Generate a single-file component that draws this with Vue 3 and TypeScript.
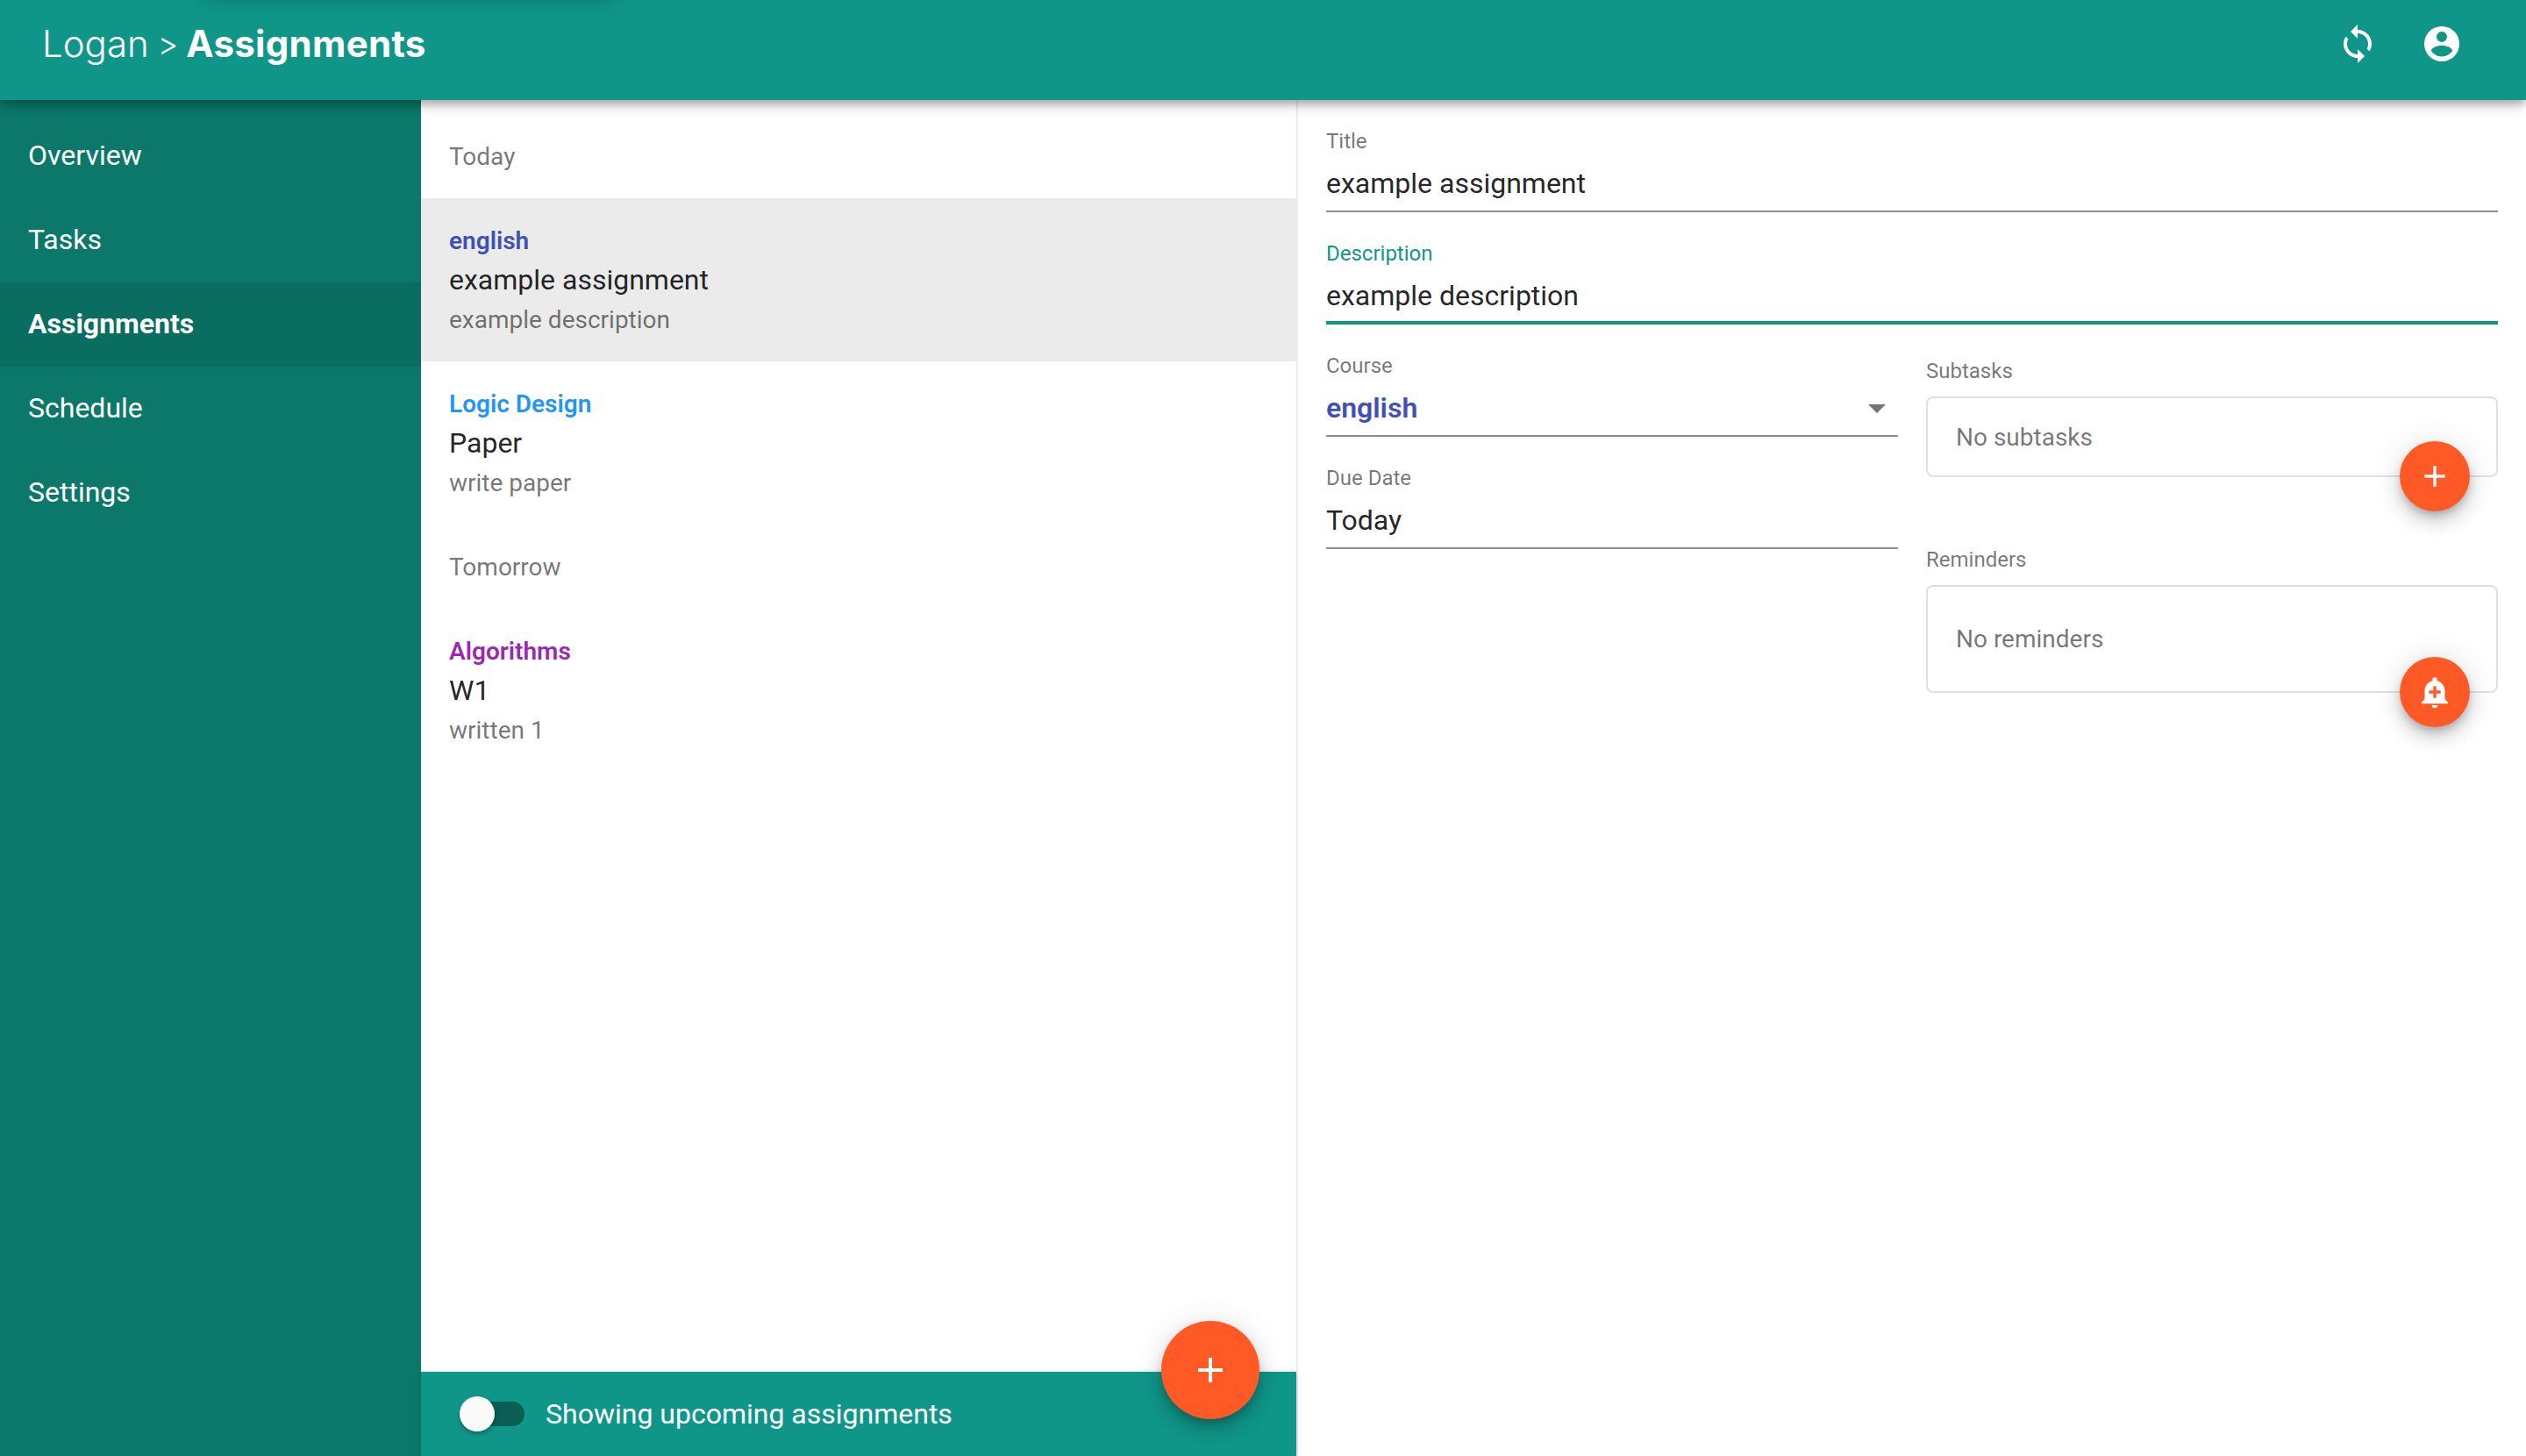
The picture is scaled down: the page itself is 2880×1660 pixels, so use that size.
<script setup lang="ts">
interface Assignment {
  course: string
  color: string
  title: string
  desc: string
  selected?: boolean
}
interface Group {
  label: string
  items: Assignment[]
}
const nav: string[] = ['Overview', 'Tasks', 'Assignments', 'Schedule', 'Settings']
const active = 'Assignments'
const groups: Group[] = [
  {
    label: 'Today',
    items: [
      { course: 'english', color: '#3f51b5', title: 'example assignment', desc: 'example description', selected: true },
      { course: 'Logic Design', color: '#2196f3', title: 'Paper', desc: 'write paper' },
    ],
  },
  {
    label: 'Tomorrow',
    items: [{ course: 'Algorithms', color: '#9c27b0', title: 'W1', desc: 'written 1' }],
  },
]
</script>

<template>
  <div class="app">
    <header class="topbar">
      <div class="brand">
        <span class="brand-user">Logan</span>
        <span class="brand-sep">&gt;</span>
        <span class="brand-page">Assignments</span>
      </div>
      <div class="top-icons">
        <svg class="top-icon" viewBox="0 0 24 24"><path d="M12 4V1L8 5l4 4V6c3.31 0 6 2.69 6 6 0 1.01-.25 1.97-.7 2.8l1.46 1.46C19.54 15.03 20 13.57 20 12c0-4.42-3.58-8-8-8zm0 14c-3.31 0-6-2.69-6-6 0-1.01.25-1.97.7-2.8L5.24 7.74C4.46 8.97 4 10.43 4 12c0 4.42 3.58 8 8 8v3l4-4-4-4v3z" /></svg>
        <svg class="top-icon" viewBox="0 0 24 24"><path d="M12,19.2C9.5,19.2 7.29,17.92 6,16C6.03,14 10,12.9 12,12.9C14,12.9 17.97,14 18,16C16.71,17.92 14.5,19.2 12,19.2M12,5A3,3 0 0,1 15,8A3,3 0 0,1 12,11A3,3 0 0,1 9,8A3,3 0 0,1 12,5M12,2A10,10 0 0,0 2,12A10,10 0 0,0 12,22A10,10 0 0,0 22,12A10,10 0 0,0 12,2Z" /></svg>
      </div>
    </header>

    <div class="main">
      <nav class="sidebar">
        <div v-for="n in nav" :key="n" class="nav-item" :class="{ active: n === active }">{{ n }}</div>
      </nav>

      <section class="list-pane">
        <div class="list">
          <template v-for="g in groups" :key="g.label">
            <div class="subheader">{{ g.label }}</div>
            <div v-for="a in g.items" :key="a.title" class="item" :class="{ selected: a.selected }">
              <div class="item-course" :style="{ color: a.color }">{{ a.course }}</div>
              <div class="item-title">{{ a.title }}</div>
              <div class="item-desc">{{ a.desc }}</div>
            </div>
          </template>
        </div>
        <div class="footer">
          <div class="switch">
            <span class="track"></span>
            <span class="thumb"></span>
          </div>
          <span class="footer-label">Showing upcoming assignments</span>
          <button class="fab fab-large">
            <svg viewBox="0 0 24 24"><path d="M19 13h-6v6h-2v-6H5v-2h6V5h2v6h6v2z" /></svg>
          </button>
        </div>
      </section>

      <section class="detail">
        <div class="field">
          <div class="label">Title</div>
          <div class="value">example assignment</div>
        </div>
        <div class="field focused">
          <div class="label">Description</div>
          <div class="value">example description</div>
        </div>
        <div class="columns">
          <div class="col">
            <div class="field">
              <div class="label">Course</div>
              <div class="value course">
                <span>english</span>
                <svg class="caret" viewBox="0 0 24 24"><path d="M7 10l5 5 5-5z" /></svg>
              </div>
            </div>
            <div class="field">
              <div class="label">Due Date</div>
              <div class="value">Today</div>
            </div>
          </div>
          <div class="col col-right">
            <div class="label box-label">Subtasks</div>
            <div class="box box-sub">
              <span>No subtasks</span>
              <button class="fab fab-small">
                <svg viewBox="0 0 24 24"><path d="M19 13h-6v6h-2v-6H5v-2h6V5h2v6h6v2z" /></svg>
              </button>
            </div>
            <div class="label box-label second">Reminders</div>
            <div class="box box-rem">
              <span>No reminders</span>
              <button class="fab fab-small">
                <svg viewBox="0 0 24 24"><path d="M10.01 21.01c0 1.1.89 1.99 1.99 1.99s1.99-.89 1.99-1.99h-3.98zm8.87-4.19V11c0-3.25-2.25-5.97-5.28-6.69v-.72C13.6 2.71 12.89 2 12 2s-1.6.71-1.6 1.59v.72C7.37 5.03 5.12 7.75 5.12 11v5.82L3 18.94V20h18v-1.06l-2.12-2.12zM16 13.01h-3v3h-2v-3H8V11h3V8h2v3h3v2.01z" /></svg>
              </button>
            </div>
          </div>
        </div>
      </section>
    </div>
  </div>
</template>

<style>
html, body { margin: 0; background: #fff; }
</style>

<style scoped>
.app {
  width: 2880px;
  height: 1660px;
  display: flex;
  flex-direction: column;
  overflow: hidden;
  font-family: Roboto, "Liberation Sans", sans-serif;
  color: rgba(0, 0, 0, 0.87);
  background: #fff;
}
.topbar {
  height: 114px;
  flex: none;
  box-sizing: border-box;
  padding: 0 72px 14px 48px;
  display: flex;
  align-items: center;
  justify-content: space-between;
  background: #109688;
  color: #fff;
  position: relative;
  z-index: 5;
  box-shadow: 0 4px 8px -2px rgba(0, 0, 0, 0.2), 0 8px 10px 0 rgba(0, 0, 0, 0.14), 0 2px 20px 0 rgba(0, 0, 0, 0.12);
}
.topbar::before {
  content: "";
  position: absolute;
  left: 230px;
  top: -14px;
  width: 475px;
  height: 14px;
  box-shadow: 0 0 20px rgba(0, 0, 0, 0.22);
}
.brand {
  display: flex;
  align-items: center;
  font-family: Inter, sans-serif;
  font-size: 42px;
  line-height: 56px;
}
.brand-user { font-weight: 300; }
.brand-sep { font-weight: 300; font-size: 36px; margin: 0 9px 0 10px; }
.brand-page { font-weight: 700; letter-spacing: 0.3px; }
.top-icons { display: flex; gap: 48px; }
.top-icon { width: 48px; height: 48px; fill: #fff; display: block; }
.main { flex: 1; display: flex; min-height: 0; }
.sidebar {
  width: 480px;
  flex: none;
  box-sizing: border-box;
  padding-top: 16px;
  background: #0c7869;
  color: #fff;
}
.nav-item {
  height: 96px;
  box-sizing: border-box;
  padding: 0 0 2px 32px;
  display: flex;
  align-items: center;
  font-size: 32px;
}
.nav-item.active { background: #096e60; font-weight: 700; }
.list-pane {
  width: 1000px;
  flex: none;
  box-sizing: border-box;
  border-right: 2px solid #ececec;
  display: flex;
  flex-direction: column;
}
.list { flex: 1; padding-top: 16px; }
.subheader {
  height: 96px;
  padding-left: 32px;
  display: flex;
  align-items: center;
  font-size: 28px;
  color: rgba(0, 0, 0, 0.54);
}
.item {
  height: 186px;
  box-sizing: border-box;
  padding: 27px 32px 0;
}
.item.selected { background: #ebebeb; }
.item-course { font-size: 28px; font-weight: 600; line-height: 44px; }
.item-title { font-size: 32px; line-height: 44px; }
.item-desc { font-size: 28px; line-height: 48px; color: rgba(0, 0, 0, 0.54); }
.footer {
  height: 96px;
  flex: none;
  display: flex;
  align-items: center;
  padding-left: 44px;
  background: #109688;
  color: #fff;
  position: relative;
  box-shadow: 0 0 6px rgba(0, 0, 0, 0.12);
}
.switch { position: relative; width: 74px; height: 40px; flex: none; }
.track {
  position: absolute;
  left: 8px;
  top: 6px;
  width: 66px;
  height: 28px;
  border-radius: 14px;
  background: #0a5e54;
}
.thumb {
  position: absolute;
  left: 0;
  top: 0;
  width: 40px;
  height: 40px;
  border-radius: 50%;
  background: #fafafa;
  box-shadow: 0 2px 2px -2px rgba(0, 0, 0, 0.2), 0 4px 4px 0 rgba(0, 0, 0, 0.14), 0 2px 6px 0 rgba(0, 0, 0, 0.12);
}
.footer-label { margin-left: 24px; font-size: 32px; }
.fab {
  position: absolute;
  border: 0;
  padding: 0;
  border-radius: 50%;
  background: #ff5a25;
  display: flex;
  align-items: center;
  justify-content: center;
  box-shadow: 0 6px 10px -2px rgba(0, 0, 0, 0.2), 0 12px 20px 0 rgba(0, 0, 0, 0.14), 0 2px 36px 0 rgba(0, 0, 0, 0.12);
}
.fab svg { fill: #fff; display: block; }
.fab-large { width: 112px; height: 112px; right: 42px; top: -58px; }
.fab-large svg { width: 48px; height: 48px; }
.fab-small { width: 80px; height: 80px; right: 30px; bottom: -41px; }
.fab-small svg { width: 40px; height: 40px; }
.detail {
  flex: 1;
  box-sizing: border-box;
  padding: 29px 32px 0;
  min-width: 0;
}
.field {
  height: 99px;
  box-sizing: border-box;
  border-bottom: 2px solid #8e8e8e;
  margin-bottom: 29px;
}
.field.focused { border-bottom: 4px solid #109688; }
.label { font-size: 24px; line-height: 36px; color: rgba(0, 0, 0, 0.54); }
.focused .label { color: #109688; }
.value { font-size: 32px; line-height: 48px; margin-top: 6px; }
.course { display: flex; align-items: center; justify-content: space-between; font-weight: 600; color: #3f51b5; }
.caret { width: 48px; height: 48px; fill: rgba(0, 0, 0, 0.54); }
.columns { display: grid; grid-template-columns: 652px 652px; column-gap: 32px; }
.col-right { padding-top: 6px; }
.box-label { margin-bottom: 11px; }
.box-label.second { margin-top: 76px; }
.box {
  box-sizing: border-box;
  border: 2px solid #e0e0e0;
  border-radius: 8px;
  padding: 0 32px;
  position: relative;
  display: flex;
  align-items: center;
  font-size: 28px;
  color: rgba(0, 0, 0, 0.54);
}
.box-sub { height: 92px; }
.box-rem { height: 123px; }
</style>
